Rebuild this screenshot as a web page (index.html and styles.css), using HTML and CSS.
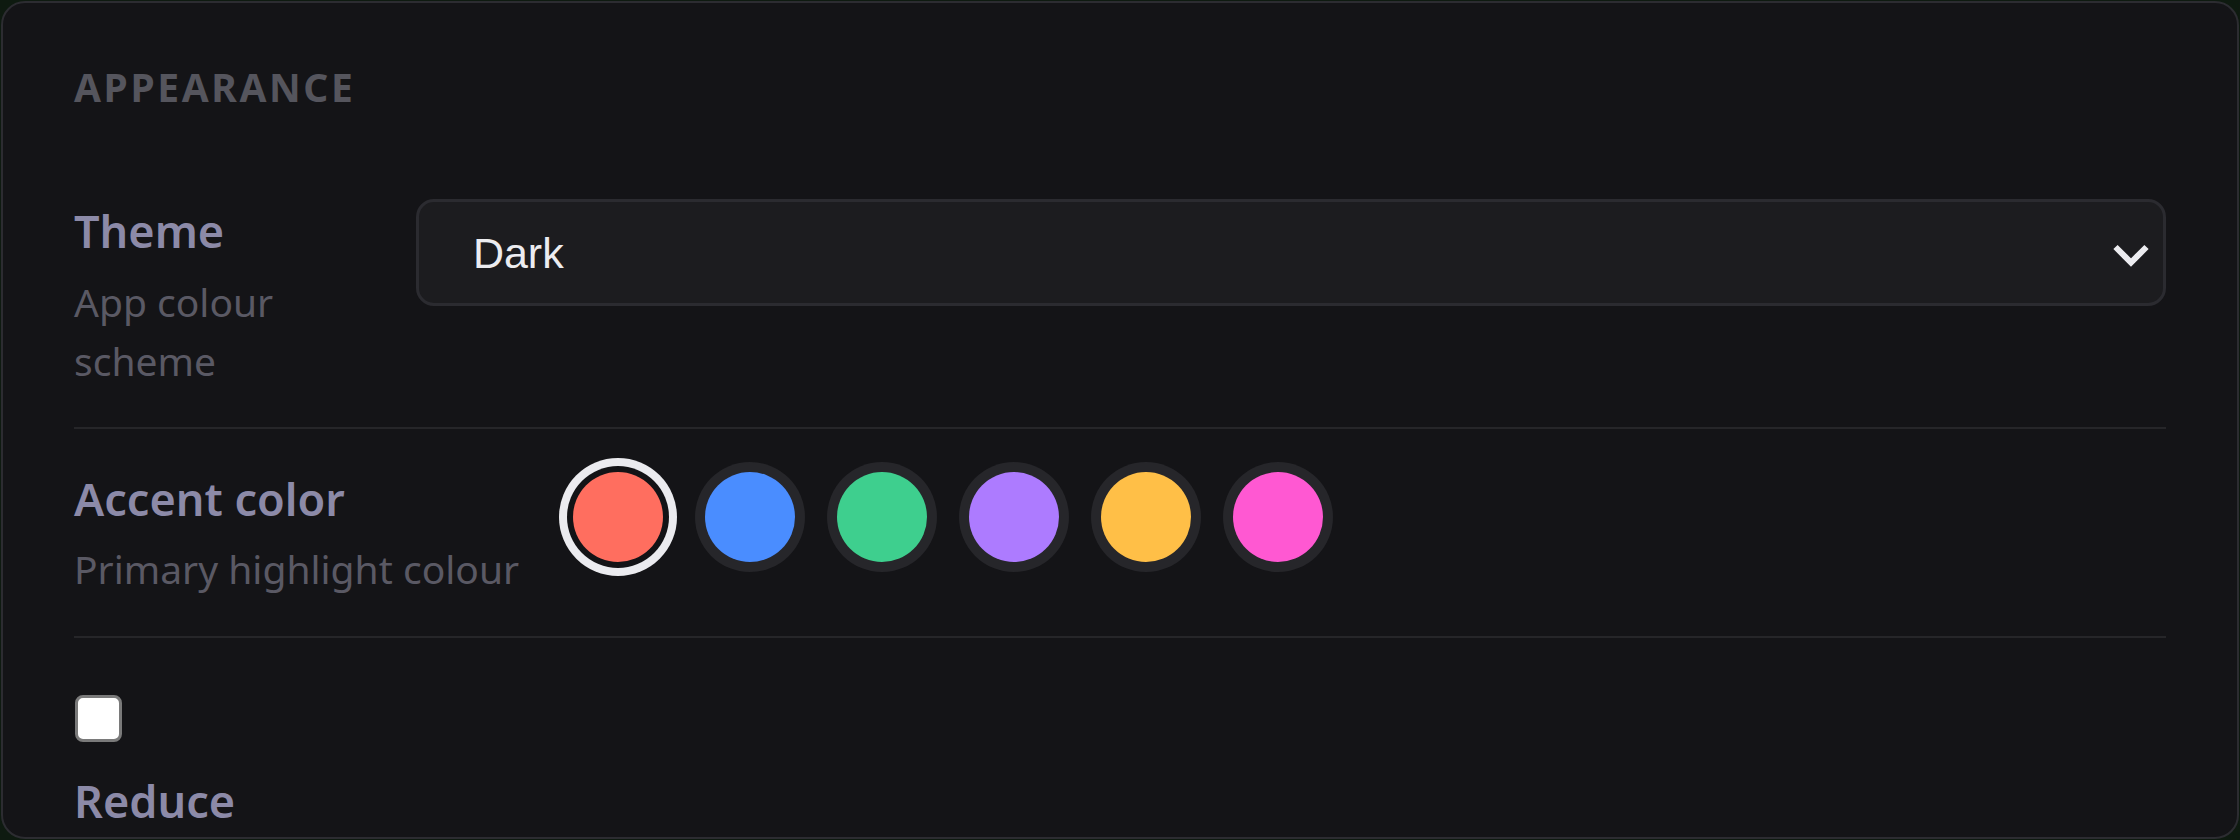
FILE: index.html
```html
<!DOCTYPE html>
<html lang="en">
<head>
<meta charset="utf-8">
<title>Appearance settings</title>
<link rel="stylesheet" href="styles.css">
</head>
<body>
<div class="page">
  <section class="card">
    <h2 class="section-title">APPEARANCE</h2>

    <div class="setting">
      <div class="setting-label">
        <div class="setting-name">Theme</div>
        <div class="setting-desc">App colour scheme</div>
      </div>
      <div class="select-wrap">
        <select class="select">
          <option>Dark</option>
          <option>Light</option>
          <option>System</option>
        </select>
        <svg class="chevron" viewBox="0 0 36 23" width="36" height="23" aria-hidden="true">
          <polyline points="2.5,3 18,18.5 33.5,3" fill="none" stroke="#ececf0" stroke-width="6" stroke-linejoin="miter"/>
        </svg>
      </div>
    </div>

    <div class="setting">
      <div class="setting-label">
        <div class="setting-name">Accent color</div>
        <div class="setting-desc">Primary highlight colour</div>
      </div>
      <div class="swatches">
        <button class="swatch swatch--selected swatch--red" aria-label="Red"></button>
        <button class="swatch swatch--blue" aria-label="Blue"></button>
        <button class="swatch swatch--green" aria-label="Green"></button>
        <button class="swatch swatch--purple" aria-label="Purple"></button>
        <button class="swatch swatch--yellow" aria-label="Yellow"></button>
        <button class="swatch swatch--pink" aria-label="Pink"></button>
      </div>
    </div>

    <div class="setting setting--toggle">
      <span class="checkbox" role="checkbox" aria-checked="false"></span>
      <div class="setting-label setting-label--narrow">
        <div class="setting-name">Reduce motion</div>
        <div class="setting-desc">Minimise animations</div>
      </div>
    </div>
  </section>
</div>
</body>
</html>
```

FILE: styles.css
```css
* { box-sizing: border-box; }

html, body {
  margin: 0;
  padding: 0;
  background: #0e1a10;
  height: 840px;
  overflow: hidden;
}

.page {
  padding: 1px;
  height: 840px;
}

.card {
  height: 838px;
  background: #141417;
  border: 2px solid #2c2c31;
  border-radius: 24px;
  padding: 57px 71px 0 71px;
  overflow: hidden;
  font-family: "Noto Sans", sans-serif;
}

.section-title {
  margin: 0 0 48px 0;
  font-size: 39px;
  font-weight: 700;
  letter-spacing: 2.6px;
  line-height: normal;
  color: #55555d;
}

.setting {
  display: flex;
  align-items: flex-start;
  gap: 48px;
  padding: 36px 0 37px 0;
  border-bottom: 2px solid #262629;
}

.setting-label {
  flex: 0 1 auto;
}

.setting-name {
  font-size: 45px;
  font-weight: 600;
  line-height: 1.5;
  color: #8c8aa8;
}

.setting-desc {
  margin-top: 7px;
  font-size: 39px;
  line-height: 59px;
  color: #5a5964;
}

.select-wrap {
  position: relative;
  width: 100%;
  margin-top: 2px;
}

.select {
  appearance: none;
  -webkit-appearance: none;
  width: 100%;
  height: 107px;
  margin: 0;
  padding: 0 80px 0 54px;
  background: #1c1c1f;
  border: 3px solid #2b2b30;
  border-radius: 18px;
  color: #ececf0;
  font-family: "Liberation Sans", Arial, sans-serif;
  font-size: 43px;
}

.chevron {
  position: absolute;
  right: 17px;
  top: 45px;
  pointer-events: none;
}

.swatches {
  display: flex;
  align-items: flex-start;
  gap: 42px;
  padding: 7px 0 37px 6px;
}

.swatch {
  width: 90px;
  height: 90px;
  padding: 0;
  border: none;
  border-radius: 50%;
  box-shadow: 0 0 0 10px #26262a;
  cursor: pointer;
}

.swatch--selected {
  box-shadow: 0 0 0 6px #131316, 0 0 0 14px #ebebef;
}

.swatch--red { background: #ff6e5f; }
.swatch--blue { background: #4a8dff; }
.swatch--green { background: #3ecf8e; }
.swatch--purple { background: #ad7bff; }
.swatch--yellow { background: #ffbf47; }
.swatch--pink { background: #ff58d2; }

.setting--toggle {
  flex-direction: column;
  gap: 0;
  border-bottom: none;
}

.checkbox {
  display: block;
  width: 47px;
  height: 47px;
  margin: 21px 0 0 1px;
  background: #ffffff;
  border: 3px solid #7a7a7a;
  border-radius: 8px;
}

.setting-label--narrow {
  margin-top: 25px;
  width: 200px;
}
```
